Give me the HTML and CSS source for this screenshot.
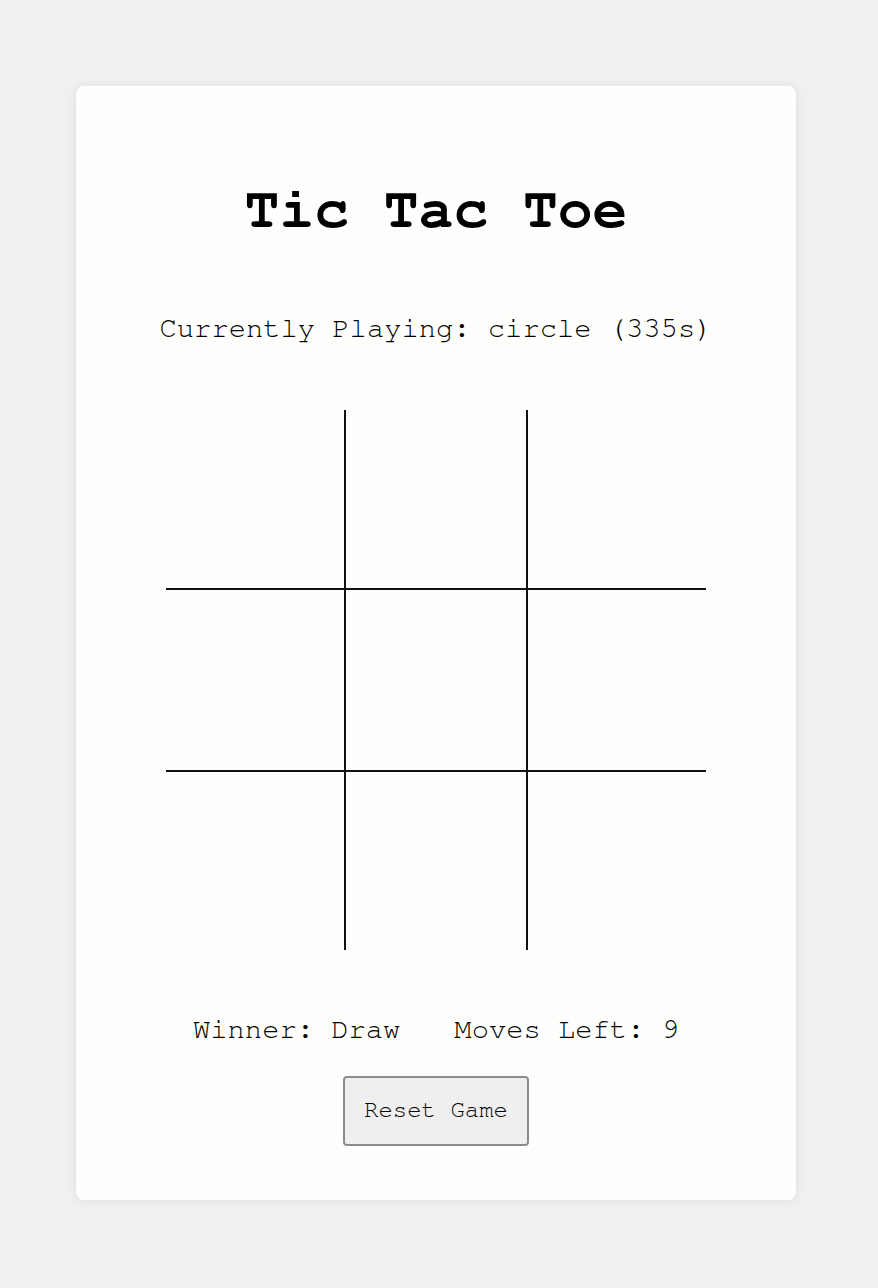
FILE: index.html
```html
<!DOCTYPE html>
<html lang="en">
<head>
<meta charset="utf-8">
<title>Tic Tac Toe</title>
<link rel="stylesheet" href="styles.css">
</head>
<body>
  <main class="card">
    <h1 class="title">Tic Tac Toe</h1>
    <p class="status">Currently Playing: circle (335s)</p>
    <div class="board">
      <div class="cell"></div><div class="cell"></div><div class="cell"></div>
      <div class="cell"></div><div class="cell"></div><div class="cell"></div>
      <div class="cell"></div><div class="cell"></div><div class="cell"></div>
    </div>
    <div class="info">
      <span>Winner: Draw</span>
      <span>Moves Left: 9</span>
    </div>
    <button class="reset" type="button">Reset Game</button>
  </main>
</body>
</html>
```

FILE: styles.css
```css
html, body {
  margin: 0;
  padding: 0;
}

body {
  background: #f0f0f0;
  font-family: "Nimbus Mono PS", "Nimbus Mono L", "FreeMono", "Courier", "Courier New", monospace;
  color: #000;
  display: flex;
  justify-content: center;
  align-items: flex-start;
  padding: 86px 6px 0 0;
  min-height: 1288px;
  box-sizing: border-box;
}

.card {
  width: 720px;
  background: #fefefd;
  border-radius: 8px;
  box-shadow: 0 0 10px rgba(0, 0, 0, 0.08);
  display: flex;
  flex-direction: column;
  align-items: center;
  padding: 95px 0 54px;
  box-sizing: border-box;
}

.title {
  margin: 0;
  font-size: 58px;
  line-height: 58px;
  font-weight: bold;
}

.status {
  margin: 75px 0 0;
  font-size: 28.8px;
  line-height: 29px;
}

.board {
  margin-top: 67px;
  display: grid;
  grid-template-columns: 178px 180px 178px;
  grid-template-rows: 178px 180px 178px;
  gap: 2px;
  background: #111;
}

.cell {
  background: #fefefd;
}

.info {
  margin-top: 65px;
  display: flex;
  gap: 54px;
  font-size: 28.8px;
  line-height: 29px;
  white-space: pre;
}

.reset {
  margin-top: 32px;
  font-family: inherit;
  font-size: 24px;
  line-height: 28px;
  padding: 18px 19px 20px;
  color: #000;
  background: #efefef;
  border: 2px solid #8c8c8c;
  border-radius: 4px;
}
```
